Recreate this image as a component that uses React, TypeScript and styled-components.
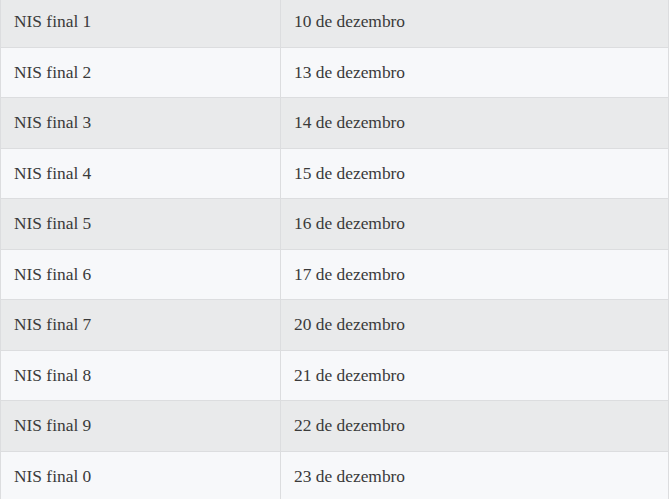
import React from 'react'
import styled, { createGlobalStyle } from 'styled-components'

const rows = [
  ['NIS final 1', '10 de dezembro'],
  ['NIS final 2', '13 de dezembro'],
  ['NIS final 3', '14 de dezembro'],
  ['NIS final 4', '15 de dezembro'],
  ['NIS final 5', '16 de dezembro'],
  ['NIS final 6', '17 de dezembro'],
  ['NIS final 7', '20 de dezembro'],
  ['NIS final 8', '21 de dezembro'],
  ['NIS final 9', '22 de dezembro'],
  ['NIS final 0', '23 de dezembro'],
]

const GlobalStyle = createGlobalStyle`
  html, body {
    margin: 0;
    padding: 0;
    background: #ffffff;
    overflow: hidden;
  }
`

const Table = styled.table`
  width: 669px;
  margin-top: -4px;
  border-collapse: collapse;
  font-family: "Liberation Serif", "DejaVu Serif", serif;
  font-size: 17.4px;
  color: #3a3a3a;
`

const Row = styled.tr<{ $odd: boolean }>`
  height: 50.5px;
  background: ${(p) => (p.$odd ? '#e9eaeb' : '#f7f8fa')};
`

const Cell = styled.td`
  border: 1px solid #dcdddf;
  padding: 0 12px 0 13px;
  vertical-align: middle;
  &:first-child {
    width: 254px;
  }
`

const App = () => {
  return (
    <>
      <GlobalStyle />
      <Table>
        <tbody>
          {rows.map(([nis, date], i) => (
            <Row key={nis} $odd={i % 2 === 0}>
              <Cell>{nis}</Cell>
              <Cell>{date}</Cell>
            </Row>
          ))}
        </tbody>
      </Table>
    </>
  )
}

export default App
